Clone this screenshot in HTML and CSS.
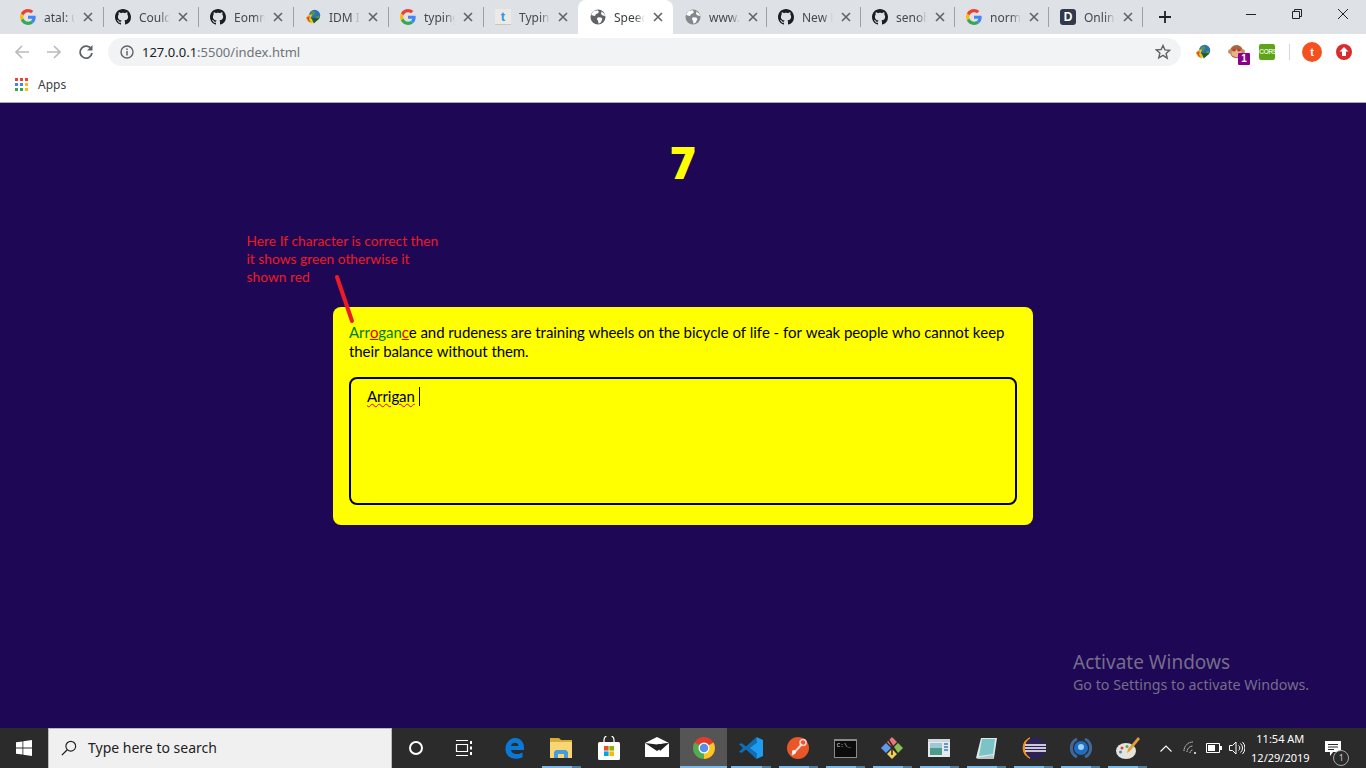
FILE: index.html
```html
<!DOCTYPE html>
<html lang="en">
<head>
    <meta charset="UTF-8">
    <title>Speed Typing</title>
    <link rel="stylesheet" href="styles.css">
</head>
<body>
    <svg class="defs" width="0" height="0">
        <symbol id="g-logo" viewBox="0 0 48 48">
            <path fill="#EA4335" d="M24 9.5c3.54 0 6.71 1.22 9.21 3.6l6.85-6.85C35.9 2.38 30.47 0 24 0 14.62 0 6.51 5.38 2.56 13.22l7.98 6.19C12.43 13.72 17.74 9.5 24 9.5z"/>
            <path fill="#4285F4" d="M46.98 24.55c0-1.57-.15-3.09-.38-4.55H24v9.02h12.94c-.58 2.96-2.26 5.48-4.78 7.18l7.73 6c4.51-4.18 7.09-10.36 7.09-17.65z"/>
            <path fill="#FBBC05" d="M10.53 28.59c-.5-1.45-.79-2.99-.79-4.59s.28-3.14.79-4.59l-7.98-6.19C.92 16.46 0 20.12 0 24c0 3.88.92 7.54 2.56 10.78l7.97-6.19z"/>
            <path fill="#34A853" d="M24 48c6.48 0 11.93-2.13 15.89-5.81l-7.73-6c-2.15 1.45-4.92 2.3-8.16 2.3-6.26 0-11.57-4.22-13.47-9.91l-7.98 6.19C6.51 42.62 14.62 48 24 48z"/>
        </symbol>
        <symbol id="github" viewBox="0 0 16 16">
            <path fill="#1b1f23" d="M8 0C3.58 0 0 3.58 0 8c0 3.54 2.29 6.53 5.47 7.59.4.07.55-.17.55-.38 0-.19-.01-.82-.01-1.49-2.01.37-2.53-.49-2.69-.94-.09-.23-.48-.94-.82-1.13-.28-.15-.68-.52-.01-.53.63-.01 1.08.58 1.23.82.72 1.21 1.87.87 2.33.66.07-.52.28-.87.51-1.07-1.78-.2-3.64-.89-3.64-3.95 0-.87.31-1.59.82-2.15-.08-.2-.36-1.02.08-2.12 0 0 .67-.21 2.2.82.64-.18 1.32-.27 2-.27.68 0 1.36.09 2 .27 1.53-1.04 2.2-.82 2.2-.82.44 1.1.16 1.92.08 2.12.51.56.82 1.27.82 2.15 0 3.07-1.87 3.75-3.65 3.95.29.25.54.73.54 1.48 0 1.07-.01 1.93-.01 2.2 0 .21.15.46.55.38A8.013 8.013 0 0016 8c0-4.42-3.58-8-8-8z"/>
        </symbol>
        <symbol id="globe" viewBox="0 0 16 16">
            <circle cx="8" cy="8" r="7.5" fill="currentColor"/>
            <path fill="#fff" d="M4 1.800 7.500 1.200 9 3 7.600 4.600 6 5 5 7 2.800 6.400 1.200 6Q2 3.400 4 1.800zM8 8.200l3.200.3 1.200 1.600-1.600 3.500-2.200 1.200-.6-3L6.800 10zM11.500 2.600l3 2.400.6 2-2.300-.6-1.800-1.400z"/>
        </symbol>
        <symbol id="idm" viewBox="0 0 20 20">
            <circle cx="12" cy="8" r="7" fill="#2f6fb8"/>
            <path fill="#4c9a3a" d="M7 5l4-3 2 3-2 3-3 0zM14 9l4-1-1 4-3 1z"/>
            <path fill="#e8c42c" d="M1 11q3-5 8-4l-2 5 6 2-5 4q-6-2-7-7z"/>
            <path fill="#d9452f" d="M2 11q2-2 4-2l-1 4 2 3-2 0z"/>
            <path fill="#1f5e24" d="M8 11l10 1-7 6z"/>
        </symbol>
        <symbol id="close-x" viewBox="0 0 10 10">
            <path d="M1 1l8 8M9 1l-8 8" stroke="#5f6368" stroke-width="1.600" fill="none"/>
        </symbol>
    </svg>

    <!-- browser top -->
    <div class="tabstrip">
        <div class="tab tab-wide"><svg class="favicon"><use href="#g-logo"/></svg><span class="tab-title">atal: u</span><svg class="tab-close"><use href="#close-x"/></svg></div>
        <div class="tab tab-wide"><svg class="favicon"><use href="#github"/></svg><span class="tab-title">Could</span><svg class="tab-close"><use href="#close-x"/></svg></div>
        <div class="tab tab-wide"><svg class="favicon"><use href="#github"/></svg><span class="tab-title">Eomm</span><svg class="tab-close"><use href="#close-x"/></svg></div>
        <div class="tab tab-wide"><svg class="favicon"><use href="#idm"/></svg><span class="tab-title">IDM I</span><svg class="tab-close"><use href="#close-x"/></svg></div>
        <div class="tab tab-wide"><svg class="favicon"><use href="#g-logo"/></svg><span class="tab-title">typing</span><svg class="tab-close"><use href="#close-x"/></svg></div>
        <div class="tab tab-wide tab-before-active">
            <span class="favicon typing-icon">t</span><span class="tab-title">Typing</span><svg class="tab-close"><use href="#close-x"/></svg>
        </div>
        <div class="tab tab-wide tab-active"><svg class="favicon favicon-dark"><use href="#globe"/></svg><span class="tab-title">Speec</span><svg class="tab-close"><use href="#close-x"/></svg></div>
        <div class="tab tab-narrow"><svg class="favicon favicon-grey"><use href="#globe"/></svg><span class="tab-title">www.</span><svg class="tab-close"><use href="#close-x"/></svg></div>
        <div class="tab"><svg class="favicon"><use href="#github"/></svg><span class="tab-title">New P</span><svg class="tab-close"><use href="#close-x"/></svg></div>
        <div class="tab"><svg class="favicon"><use href="#github"/></svg><span class="tab-title">senol</span><svg class="tab-close"><use href="#close-x"/></svg></div>
        <div class="tab"><svg class="favicon"><use href="#g-logo"/></svg><span class="tab-title">norm</span><svg class="tab-close"><use href="#close-x"/></svg></div>
        <div class="tab"><span class="favicon d-icon">D</span><span class="tab-title">Onlin</span><svg class="tab-close"><use href="#close-x"/></svg></div>
        <svg class="new-tab" viewBox="0 0 12 12"><path d="M6 0v12M0 6h12" stroke="#202124" stroke-width="1.800"/></svg>
        <div class="window-controls">
            <svg viewBox="0 0 46 28"><path d="M18 14.500h10" stroke="#222" stroke-width="1"/></svg>
            <svg viewBox="0 0 46 28"><path d="M18.500 12.500h7v7h-7zM20.500 12.500v-2h7v7h-2" stroke="#222" fill="none" stroke-width="1" transform="translate(0 -1)"/></svg>
            <svg viewBox="0 0 46 28"><path d="M18 9l10 10M28 9l-10 10" stroke="#222" stroke-width="1"/></svg>
        </div>
    </div>

    <div class="toolbar">
        <svg class="nav-btn" viewBox="0 0 16 16"><path d="M15 8H2M8 2L2 8l6 6" stroke="#b9bbbe" stroke-width="1.700" fill="none"/></svg>
        <svg class="nav-btn" viewBox="0 0 16 16"><path d="M1 8h13M8 2l6 6-6 6" stroke="#b9bbbe" stroke-width="1.700" fill="none"/></svg>
        <svg class="nav-btn" viewBox="0 0 16 16"><path d="M13.300 5.200A6 6 0 1 0 14 9" stroke="#5f6368" stroke-width="1.800" fill="none"/><path d="M14.500 1v5.500H9z" fill="#5f6368"/></svg>
        <div class="omnibox">
            <svg class="info-icon" viewBox="0 0 14 14"><circle cx="7" cy="7" r="6" stroke="#5f6368" stroke-width="1.400" fill="none"/><path d="M7 6v4.500M7 3.400v1.500" stroke="#5f6368" stroke-width="1.500"/></svg>
            <span class="url"><b>127.0.0.1</b>:5500/index.html</span>
            <svg class="star" viewBox="0 0 16 16"><path d="M8 1.500l1.900 4.400 4.800.4-3.600 3.200 1.100 4.700L8 11.300l-4.200 2.500 1.100-4.700-3.600-3.200 4.800-.4z" stroke="#5f6368" stroke-width="1.400" fill="none"/></svg>
        </div>
        <div class="extensions">
            <svg class="ext" viewBox="0 0 20 20"><use href="#idm"/></svg>
            <div class="ext monkey">
                <svg viewBox="0 0 18 18"><circle cx="9" cy="8" r="7" fill="#a5673f"/><circle cx="2.500" cy="8" r="2.500" fill="#c98a5e"/><circle cx="15.500" cy="8" r="2.500" fill="#c98a5e"/><ellipse cx="9" cy="10" rx="5.500" ry="4" fill="#e6b48c"/><circle cx="6.500" cy="6.500" r="1.500" fill="#c0392b"/><circle cx="11.500" cy="6.500" r="1.500" fill="#c0392b"/></svg>
                <span class="ext-badge">1</span>
            </div>
            <div class="ext cors"><span>CORS</span></div>
            <span class="ext-sep"></span>
            <span class="avatar">t</span>
            <svg class="ext upload" viewBox="0 0 16 16"><circle cx="8" cy="8" r="8" fill="#d92d2d"/><path d="M8 3l4.500 4.500H10V12H6V7.500H3.500z" fill="#fff"/></svg>
        </div>
    </div>

    <div class="bookmarks">
        <span class="apps-grid"><i class="r"></i><i class="r"></i><i class="r"></i><i class="b"></i><i class="b"></i><i class="y"></i><i class="g"></i><i class="g"></i><i class="y"></i></span>
        <span>Apps</span>
    </div>

    <!-- the page itself -->
    <main class="page">
        <h1 class="timer">7</h1>

        <div class="card">
            <div class="quote"><span class="ok">Arr</span><span class="bad">o</span><span class="ok">gan</span><span class="bad">c</span>e and rudeness are training wheels on the bicycle of life - for weak people who cannot keep their balance without them.</div>
            <div class="quote-input"><span class="typo">Arrigan</span> <span class="caret"></span></div>
        </div>

        <p class="note">Here If character is correct then<br>it shows green otherwise it<br>shown red</p>
        <svg class="note-line" width="24" height="54" viewBox="0 0 24 54"><path d="M4 4l15 44" stroke="#ed1c24" stroke-width="4" stroke-linecap="round"/></svg>

        <div class="activate">
            <div class="activate-title">Activate Windows</div>
            <div>Go to Settings to activate Windows.</div>
        </div>
    </main>

    <!-- windows taskbar -->
    <footer class="taskbar">
        <div class="start">
            <svg viewBox="0 0 16 16" width="16" height="16"><path fill="#fff" d="M0 2.300l6.500-.9v6.200H0zM7.300 1.300L16 0v7.600H7.300zM0 8.400h6.500v6.200L0 13.700zM7.300 8.400H16V16l-8.700-1.300z"/></svg>
        </div>
        <div class="search">
            <svg viewBox="0 0 18 18" width="16" height="16"><circle cx="11" cy="7" r="5.500" stroke="#222" stroke-width="1.300" fill="none"/><path d="M7 11l-6 6" stroke="#222" stroke-width="1.500"/></svg>
            <span>Type here to search</span>
        </div>
        <div class="sys-btn"><span class="cortana"></span></div>
        <div class="sys-btn">
            <svg viewBox="0 0 18 16" width="18" height="16"><path d="M1 .5h12M1 15.500h12M1.500 4.500h11v7h-11z" stroke="#fff" stroke-width="1.200" fill="none"/><path d="M16 1v3M16 6.500v3M16 12v3" stroke="#fff" stroke-width="2"/></svg>
        </div>

        <div class="apps">
            <div class="app">
                <svg viewBox="0 0 24 24"><path d="M3.500 14C3 7 8 2 13 2c6 0 9 4.500 9 10v2H9c.5 4 6 5.500 11.500 2.500v4.800c-6 3-16 2-17-7.300zM9 10h7.500c0-4-6.500-4.500-7.500 0z" fill="#0a78d7"/></svg>
            </div>
            <div class="app running">
                <svg viewBox="0 0 24 24"><path fill="#d9a93b" d="M1 2h9l2 2h11v18H1z"/><path fill="#f7d674" d="M1 6h22v16H1z"/><path fill="#4a9bdc" d="M7 14h10l2 2v6h-4v-4H9v4H5v-6z"/></svg>
            </div>
            <div class="app">
                <svg viewBox="0 0 24 24"><path d="M7 7V4a5 5 0 0 1 10 0v3" stroke="#fff" stroke-width="1.200" fill="none"/><rect x="1" y="6" width="22" height="18" rx="1.500" fill="#fff"/><rect x="7" y="10" width="4.600" height="4.600" fill="#f25022"/><rect x="12.400" y="10" width="4.600" height="4.600" fill="#7fba00"/><rect x="7" y="15.400" width="4.600" height="4.600" fill="#00a4ef"/><rect x="12.400" y="15.400" width="4.600" height="4.600" fill="#ffb900"/></svg>
            </div>
            <div class="app">
                <svg viewBox="0 0 24 24"><path fill="#fff" d="M0 7l12-6 12 6v14H0z"/><path fill="#222" d="M0 7l12 8 12-8-12 1.500z"/><path fill="#222" d="M12 8.500L24 7l-9 8z"/></svg>
            </div>
            <div class="app active">
                <svg viewBox="0 0 48 48"><circle cx="24" cy="24" r="22" fill="#e33b2e"/><path fill="#f9c81e" d="M24 24L43 13a22 22 0 0 1-19 33z"/><path fill="#4cae4f" d="M24 24v22A22 22 0 0 1 5 13z"/><circle cx="24" cy="24" r="11" fill="#fff"/><circle cx="24" cy="24" r="8.500" fill="#5b8ee6"/></svg>
            </div>
            <div class="app running">
                <svg viewBox="0 0 24 24"><path fill="#0f6db5" d="M17.500 1v22L7 13.500 2.500 17 0 15.700 4 12 0 8.300 2.500 7 7 10.500z"/><path fill="#1f9cf0" d="M17.500 7l-6.500 5 6.500 5zM17.500 1L24 4v16l-6.500 3z"/></svg>
            </div>
            <div class="app running">
                <svg viewBox="0 0 24 24"><circle cx="12" cy="12" r="11" fill="#e8562a"/><path d="M6 19L16 8" stroke="#f3d9cf" stroke-width="2"/><circle cx="17" cy="6.500" r="3" stroke="#f3d9cf" stroke-width="1.500" fill="none"/><circle cx="8" cy="16" r="2" fill="#fff"/></svg>
            </div>
            <div class="app running"><div class="cmd"><span>C:\_</span></div></div>
            <div class="app running">
                <svg viewBox="0 0 24 24"><path fill="#e8777b" d="M12 1l5 5-5 5-5-5z"/><path fill="#8cc152" d="M18 7l5 5-5 5-5-5z"/><path fill="#f0d25a" d="M12 13l5 5-5 5-5-5z"/><path fill="#5d9cec" d="M6 7l5 5-5 5-5-5z"/><path d="M8 3l9 14M12 10v9" stroke="#33281f" stroke-width="1.500"/></svg>
            </div>
            <div class="app running">
                <svg viewBox="0 0 24 24"><rect x="1" y="3" width="22" height="18" fill="#e6e9ea"/><rect x="1" y="3" width="22" height="3" fill="#cfd5d8"/><rect x="3" y="7" width="12" height="12" fill="#4d9a8e"/><rect x="3" y="7" width="12" height="5" fill="#9cc8d8"/><path d="M17 8h4M17 11h4M17 14h4" stroke="#3a7fbf" stroke-width="1.500"/></svg>
            </div>
            <div class="app running">
                <svg viewBox="0 0 24 24"><path fill="#dfe8e8" d="M7 2h16l-3 20H2z"/><path fill="#79c4c6" d="M8 3h13l-2 15-14 2z"/><path fill="#b9c4c4" d="M2 22l17-3 1 4H4z"/></svg>
            </div>
            <div class="app running">
                <svg viewBox="0 0 24 24"><circle cx="13" cy="12" r="11" fill="#2c2255"/><path d="M8 1.800A11 11 0 0 0 8 22.200 12 12 0 0 1 8 1.800z" fill="#f7941e" stroke="#f7941e"/><path d="M3 9h21M3 12h21M3 15h21" stroke="#fff" stroke-width="1.300"/></svg>
            </div>
            <div class="app running">
                <svg viewBox="0 0 24 24"><path d="M8 3a10 10 0 0 0 0 18M16 3a10 10 0 0 1 0 18" stroke="#41689c" stroke-width="3" fill="none"/><circle cx="12" cy="12" r="7" fill="#1f6cc4"/><circle cx="12" cy="11" r="3" fill="#9cd0f5"/></svg>
            </div>
            <div class="app running">
                <svg viewBox="0 0 24 24"><ellipse cx="10" cy="15" rx="10" ry="8" fill="#e4e4da"/><circle cx="6" cy="12" r="1.500" fill="#d64541"/><circle cx="11" cy="10.500" r="1.500" fill="#4caf50"/><circle cx="4.500" cy="16" r="1.500" fill="#3d8bd4"/><path d="M22 1l2 2-10 12-3 2 1-4z" fill="#e59a3a"/></svg>
            </div>
        </div>

        <div class="tray">
            <svg class="chevron" viewBox="0 0 12 7" width="12" height="7"><path d="M.5 6.500L6 1l5.500 5.500" stroke="#fff" stroke-width="1.100" fill="none"/></svg>
            <svg class="tray-icon wifi" viewBox="0 0 16 14" width="16" height="14"><path d="M1 10a9 9 0 0 1 9-9M4 11a6 6 0 0 1 6-6M7 12a3 3 0 0 1 3-3" stroke="#ddd" stroke-width="1" fill="none" stroke-dasharray="1.500 .7"/><circle cx="12" cy="12" r="1" fill="#fff"/></svg>
            <svg class="tray-icon battery" viewBox="0 0 16 10" width="16" height="10"><path d="M.5.500h13v9H.5z" stroke="#fff" fill="none"/><rect x="2" y="2" width="7" height="6" fill="#fff"/><rect x="14" y="3" width="2" height="4" fill="#fff"/></svg>
            <svg class="tray-icon volume" viewBox="0 0 16 14" width="16" height="14"><path d="M.5 4.500h3l3.500-3.500v12L3.500 9.500h-3z" stroke="#fff" fill="none"/><path d="M9.500 4.500a3 3 0 0 1 0 5M11.500 2.500a6 6 0 0 1 0 9M13.500 1a8.500 8.500 0 0 1 0 12" stroke="#fff" fill="none"/></svg>
            <div class="clock"><div>11:54 AM</div><div>12/29/2019</div></div>
            <div class="notify">
                <svg viewBox="0 0 16 15" width="16" height="15"><path fill="#fff" d="M0 0h16v11H8l-3 4v-4H0z"/><path d="M3 3.500h10M3 6h10M3 8.500h6" stroke="#2b2b2b"/></svg>
                <span class="notify-count">1</span>
            </div>
        </div>
    </footer>
</body>
</html>
```

FILE: styles.css
```css
* {
    box-sizing: border-box;
}
html, body {
    height: 100%;
}
body {
    margin: 0;
    display: flex;
    flex-direction: column;
    height: 768px;
    overflow: hidden;
    font-family: "Noto Sans", sans-serif;
}
.defs {
    position: absolute;
}

/* tabs */
.tabstrip {
    display: flex;
    align-items: stretch;
    height: 34px;
    padding-left: 8px;
    background-color: #dee1e6;
    flex-shrink: 0;
}
.tab {
    display: flex;
    align-items: center;
    width: 94px;
    padding-left: 12px;
    position: relative;
    font-size: 12px;
    color: #45484c;
}
.tab-wide {
    width: 95px;
}
.tab-narrow {
    width: 93px;
}
.tab::after {
    content: "";
    position: absolute;
    right: -1px;
    top: 7px;
    height: 20px;
    width: 1px;
    background-color: #9da1a6;
}
.tab-before-active::after,
.tab-active::after {
    display: none;
}
.tab-active {
    background-color: #fff;
    border-radius: 8px 8px 0 0;
    color: #3c4043;
}
.favicon {
    width: 16px;
    height: 16px;
    flex-shrink: 0;
    margin-right: 8px;
}
.favicon-dark {
    color: #5f6368;
}
.favicon-grey {
    color: #85888c;
}
.typing-icon {
    background-color: #eceae4;
    color: #2d96e8;
    font: bold 13px/15px "Liberation Sans", sans-serif;
    text-align: center;
    box-shadow: inset 0 -1px 0 #c9c7c0;
}
.d-icon {
    background-color: #31394a;
    color: #fff;
    border-radius: 3px;
    font: bold 12px/16px "Liberation Sans", sans-serif;
    text-align: center;
}
.tab-title {
    width: 36px;
    overflow: hidden;
    white-space: nowrap;
    -webkit-mask-image: linear-gradient(to right, #000 58%, transparent 86%);
    mask-image: linear-gradient(to right, #000 58%, transparent 86%);
}
.tab-close {
    width: 10px;
    height: 10px;
    margin-left: 3px;
    flex-shrink: 0;
}
.new-tab {
    width: 12px;
    height: 12px;
    margin: 11px 0 0 17px;
}
.window-controls {
    display: flex;
    margin-left: auto;
    height: 28px;
}
.window-controls svg {
    width: 46px;
    height: 28px;
}

/* toolbar */
.toolbar {
    display: flex;
    align-items: center;
    height: 36px;
    padding-left: 14px;
    background-color: #fff;
    flex-shrink: 0;
}
.nav-btn {
    width: 16px;
    height: 16px;
    margin-right: 16px;
}
.omnibox {
    display: flex;
    align-items: center;
    width: 1073px;
    height: 28px;
    margin-left: -2px;
    padding: 0 10px 0 12px;
    background-color: #f1f3f4;
    border-radius: 14px;
}
.info-icon {
    width: 14px;
    height: 14px;
    margin-right: 8px;
}
.url {
    font-size: 13px;
    color: #6f7478;
}
.url b {
    font-weight: normal;
    color: #202124;
}
.star {
    width: 16px;
    height: 16px;
    margin-left: auto;
}
.extensions {
    display: flex;
    align-items: center;
    margin-left: 14px;
}
.ext {
    width: 16px;
    height: 16px;
    flex-shrink: 0;
}
.monkey {
    position: relative;
    margin-left: 17px;
}
.monkey svg {
    width: 17px;
    height: 17px;
    display: block;
}
.ext-badge {
    position: absolute;
    left: 10px;
    top: 9px;
    width: 12px;
    height: 12px;
    background-color: #8b008b;
    border-radius: 1px;
    color: #fff;
    font: bold 10px/12px "Liberation Sans", sans-serif;
    text-align: center;
}
.cors {
    margin-left: 15px;
    background-color: #5da417;
    border-radius: 2px;
    color: #dff0c8;
    font: bold 7px/16px "Liberation Sans", sans-serif;
    letter-spacing: -0.6px;
    text-align: center;
    overflow: hidden;
}
.ext-sep {
    width: 1px;
    height: 16px;
    margin: 0 12px 0 14px;
    background-color: #d5d7da;
}
.avatar {
    width: 20px;
    height: 20px;
    border-radius: 50%;
    background-color: #f4511e;
    color: #fff;
    font: bold 11px/20px "Liberation Sans", sans-serif;
    text-align: center;
}
.upload {
    margin-left: 14px;
}

/* bookmarks */
.bookmarks {
    display: flex;
    align-items: center;
    gap: 10px;
    height: 33px;
    padding: 0 0 4px 15px;
    background-color: #fff;
    border-bottom: 1px solid #a9a9ad;
    font-size: 12px;
    color: #3c4043;
    flex-shrink: 0;
}
.apps-grid {
    display: grid;
    grid-template-columns: repeat(3, 3px);
    grid-auto-rows: 3px;
    gap: 2px;
}
.apps-grid .r { background-color: #ea4335; }
.apps-grid .b { background-color: #4285f4; }
.apps-grid .y { background-color: #fbbc05; }
.apps-grid .g { background-color: #34a853; }

/* the speed typing page */
.page {
    flex: 1;
    position: relative;
    padding-top: 30px;
    background-color: #1e0755;
}
.timer {
    margin: 0;
    font: 800 44px/58px "Open Sans", sans-serif;
    color: #ffff00;
    text-align: center;
}
.card {
    width: 700px;
    height: 218px;
    margin: 116px auto 0;
    padding: 16px;
    background-color: #ffff00;
    border-radius: 8px;
    font: 15px/19px "Lato", sans-serif;
    font-kerning: none;
    letter-spacing: -0.07px;
    color: #000;
}
.quote {
    margin-bottom: 16px;
}
.ok {
    color: #008000;
}
.bad {
    color: #e00000;
    text-decoration: underline;
}
.quote-input {
    height: 128px;
    padding: 8px 16px;
    border: 2px solid #000;
    border-radius: 8px;
}
.typo {
    text-decoration: underline wavy #e00000 1px;
}
.caret {
    display: inline-block;
    width: 1px;
    height: 19px;
    background-color: #000;
    vertical-align: top;
}
.note {
    position: absolute;
    left: 246.500px;
    top: 129px;
    margin: 0;
    font: 13.800px/18px "Lato", sans-serif;
    color: #ed1c24;
}
.note-line {
    position: absolute;
    left: 333px;
    top: 170px;
}
.activate {
    position: absolute;
    left: 1073px;
    top: 546px;
    font-size: 14.250px;
    line-height: 20px;
    color: #746e8a;
}
.activate-title {
    font-size: 19px;
    line-height: 26px;
}

/* taskbar */
.taskbar {
    display: flex;
    align-items: stretch;
    height: 40px;
    background-color: #2b2b2b;
    color: #fff;
    flex-shrink: 0;
}
.start {
    display: flex;
    align-items: center;
    justify-content: center;
    width: 48px;
}
.search {
    display: flex;
    align-items: center;
    gap: 11px;
    width: 344px;
    padding: 0 0 2px 12px;
    background-color: #f0f0f0;
    border: 1px solid #b8b8b8;
    border-width: 1px 1px 0;
    color: #222;
    font-size: 14px;
}
.sys-btn {
    display: flex;
    align-items: center;
    justify-content: center;
    width: 48px;
}
.cortana {
    width: 14px;
    height: 14px;
    border: 2px solid #fff;
    border-radius: 50%;
}
.apps {
    display: flex;
    margin-left: 2px;
}
.app {
    display: flex;
    align-items: center;
    justify-content: center;
    width: 47.100px;
    position: relative;
}
.app:nth-child(-n+4) {
    width: 47.600px;
}
.app svg {
    width: 24px;
    height: 24px;
}
.app.active {
    background-color: #555;
}
.app.running::after,
.app.active::after {
    content: "";
    position: absolute;
    left: 4px;
    right: 4px;
    bottom: 0;
    height: 2px;
    background: linear-gradient(to right, #76b9ed calc(100% - 9px), #4f7f9f calc(100% - 9px));
}
.app.active::after {
    left: 0;
    right: 0;
    background: #76b9ed;
}
.cmd {
    width: 23px;
    height: 19px;
    border: 1px solid #8a8a8a;
    border-top-width: 2px;
    background-color: #0c0c0c;
    font: 6px/9px "Liberation Mono", monospace;
    color: #ddd;
    padding-left: 2px;
}
.tray {
    display: flex;
    align-items: center;
    margin-left: 9px;
    flex: 1;
}
.chevron {
    margin-right: 11px;
}
.tray-icon {
    margin-right: 7px;
}
.clock {
    width: 72px;
    margin-left: -8px;
    font-size: 11px;
    line-height: 19px;
    text-align: center;
}
.notify {
    position: relative;
    margin-left: 9px;
    height: 15px;
}
.notify svg {
    display: block;
}
.notify-count {
    position: absolute;
    left: 8px;
    top: 9px;
    width: 16px;
    height: 16px;
    border: 1px solid #aaa;
    border-radius: 50%;
    background-color: #2b2b2b;
    font-size: 9px;
    line-height: 14px;
    text-align: center;
    color: #ccc;
}
```
